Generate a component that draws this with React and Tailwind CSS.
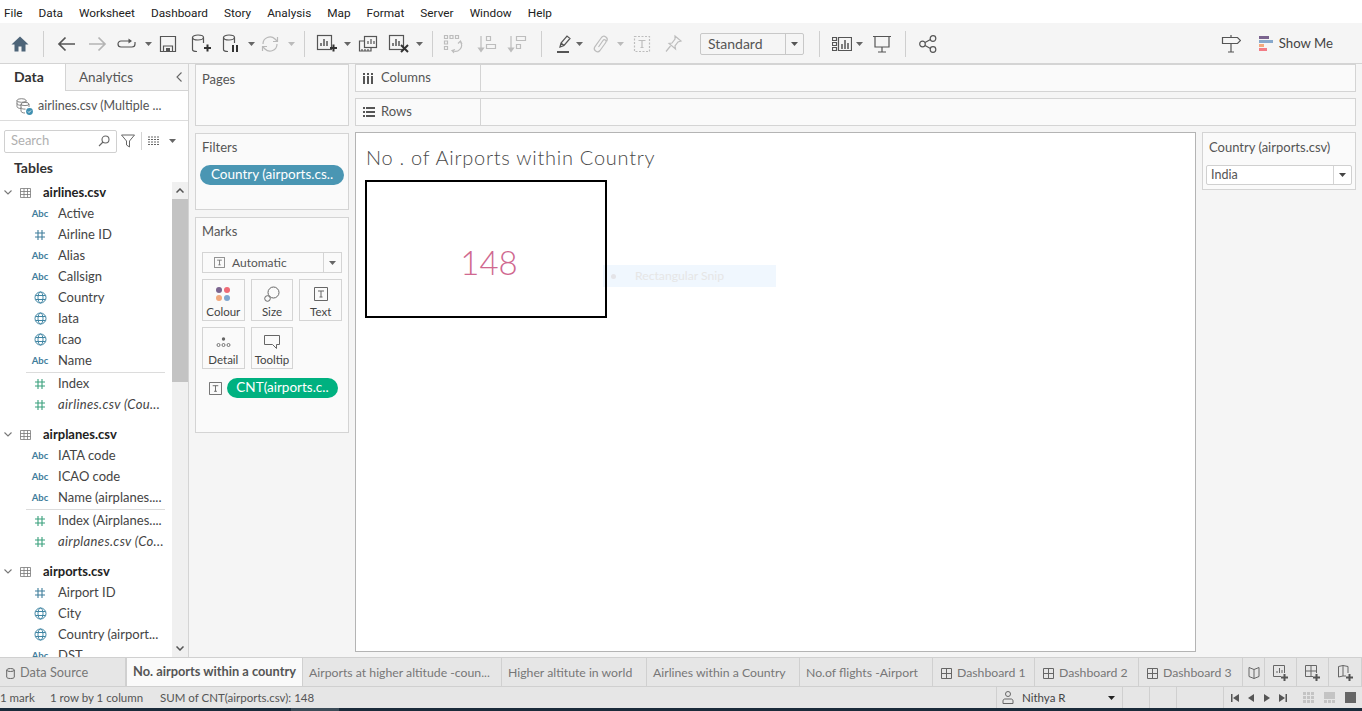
import React from "react";

const Icon = ({ w = 20, h = 20, className = "", children }) => (
  <svg
    viewBox={`0 0 ${w} ${h}`}
    width={w}
    height={h}
    fill="none"
    stroke="currentColor"
    strokeWidth="1.2"
    className={`flex-none ${className}`}
  >
    {children}
  </svg>
);

const Caret = ({ className = "" }) => (
  <svg viewBox="0 0 7 4" width="7" height="4" className={`flex-none ${className}`}>
    <path d="M0 0h7L3.5 4z" fill="currentColor" />
  </svg>
);

const Sep = ({ className = "" }) => <div className={`h-[26px] w-px flex-none bg-[#cfcfcf] ${className}`} />;

const Plus = () => <path d="M14 15h7M17.5 11.5v7" stroke="#333" strokeWidth="2" />;

function BarsBox({ children }) {
  return (
    <>
      <rect x="1.5" y="2.5" width="14" height="14" />
      <path d="M5 13v-3M8 13V6M11 13V8" strokeWidth="1.5" />
      {children}
    </>
  );
}

function Toolbar() {
  return (
    <div className="flex h-[41px] flex-none items-center border-b border-[#d4d4d4] bg-[#f5f5f5] pl-[10px] pt-[2px] text-[#555]">
      <Icon className="text-[#4d6478]">
        <path d="M10 2.5 1.5 10.5H4.5V17.5H8.5V12.5H11.5V17.5H15.5V10.5H18.5z" fill="currentColor" stroke="none" />
      </Icon>
      <Sep className="ml-[13px]" />
      <Icon className="ml-[12px]">
        <path d="M19 10H3M9.5 3.5 3 10l6.5 6.5" strokeWidth="1.7" />
      </Icon>
      <Icon className="ml-[12px] text-[#b4b4b4]">
        <path d="M1 10h16M10.500 3.500 17 10l-6.500 6.500" strokeWidth="1.7" />
      </Icon>
      <Icon className="ml-[9px]">
        <path d="M13 7H4a3 3 0 0 0 0 6h11a3 3 0 0 0 3-3V8" />
        <path d="M11.500 4.500 15 7l-3.500 2.500z" fill="currentColor" stroke="none" />
      </Icon>
      <Caret className="ml-[8px] text-[#666]" />
      <Icon className="ml-[7px]" w={18} h={18}>
        <path d="M1.500 1.500h15v15h-15zM4.500 16.500V11h9v5.500" />
        <path d="M7 13h4v3H7z" fill="currentColor" stroke="none" />
      </Icon>
      <Icon className="ml-[13px]" w={22} h={22}>
        <ellipse cx="8" cy="4.500" rx="5.500" ry="2.500" />
        <path d="M2.500 4.500v12c0 1 1.500 2 4.500 2M13.500 4.500V10" />
        <Plus />
      </Icon>
      <Icon className="ml-[9px]" w={22} h={22}>
        <ellipse cx="8" cy="4.500" rx="5.500" ry="2.500" />
        <path d="M2.500 4.500v12c0 1 1.500 2 4.500 2M13.500 4.500V10" />
        <path d="M12 12v7M16 12v7" stroke="#333" strokeWidth="2" />
      </Icon>
      <Caret className="ml-[5px] text-[#666]" />
      <Icon className="ml-[5px] text-[#b9b9b9]">
        <path d="M3 10a7 7 0 0 1 12-5l2 2M17 10a7 7 0 0 1-12 5l-2-2" />
        <path d="M17.500 3v4.500H13M2.500 17v-4.500H7" />
      </Icon>
      <Caret className="ml-[8px] text-[#bbb]" />
      <Sep className="ml-[9px]" />
      <Icon className="ml-[11px]" w={22} h={22}>
        <BarsBox />
        <Plus />
      </Icon>
      <Caret className="ml-[6px] text-[#666]" />
      <Icon className="ml-[7px]" w={20} h={18}>
        <rect x="6.500" y="1.500" width="12" height="11" />
        <path d="M10 9V6M13 9V4M16 9V6" />
        <path d="M6 6H1.500v10H13v-3" />
        <path d="M4 16v-2M7 16v-2M10 16v-2" />
      </Icon>
      <Icon className="ml-[10px]" w={22} h={22}>
        <BarsBox />
        <path d="m13 12 7 7M20 12l-7 7" stroke="#333" strokeWidth="2" />
      </Icon>
      <Caret className="ml-[6px] text-[#666]" />
      <Sep className="ml-[9px]" />
      <Icon className="ml-[10px] text-[#bdbdbd]" w={20} h={20}>
        <path d="M1.500 1.500h3v3h-3zM7 1.500h3v3H7zM12.500 1.500h3v3h-3zM1.500 7h3v3h-3zM1.500 12.500h3v3h-3z" />
        <path d="M17.500 8a6 6 0 0 1-8 8.500M15 9.500 17.500 7l1.500 3M11 19l-2-2.500 3-1" />
      </Icon>
      <Icon className="ml-[14px] text-[#bdbdbd]">
        <path d="M4 2v15M1.500 14 4 17.500 6.500 14z" fill="currentColor" />
        <path d="M9.500 2.500h4v4h-4zM9.500 10.500h9v4h-9z" />
      </Icon>
      <Icon className="ml-[10px] text-[#bdbdbd]">
        <path d="M4 2v15M1.500 14 4 17.500 6.500 14z" fill="currentColor" />
        <path d="M9.500 2.500h9v4h-9zM9.500 10.500h4v4h-4z" />
      </Icon>
      <Sep className="ml-[14px]" />
      <Icon className="ml-[11px]">
        <path d="m7 13 1-4 6-7 3 2.500-6 7zM8 9l3 2.500" />
        <path d="M4 18h12" strokeWidth="2" />
      </Icon>
      <Caret className="ml-[3px] text-[#666]" />
      <Icon className="ml-[8px] text-[#bdbdbd]">
        <path d="M7.500 13 12 6.500a1.700 1.700 0 0 1 2.800 2L9 16.500a3.200 3.200 0 0 1-5.200-3.700L10.500 3.500a3.200 3.200 0 0 1 5.200 3.700" />
      </Icon>
      <Caret className="ml-[6px] text-[#bbb]" />
      <Icon className="ml-[9px] text-[#bdbdbd]" w={18} h={18}>
        <path d="M1.500 1.500h15v15h-15z" strokeDasharray="2 1.500" />
        <path d="M5.500 5.500h7M9 5.500v7M7.500 12.500h3" />
      </Icon>
      <Icon className="ml-[12px] text-[#bdbdbd]">
        <path d="m12 2 6 5-3 1-3 4 .5 3L6 9.500l3-.5 3-4zM7.500 12 3 17.500" />
      </Icon>
      <div className="ml-[17px] flex h-[22px] w-[104px] flex-none items-center rounded-[2px] border border-[#c8c8c8] bg-[#f5f5f5] text-[14px] text-[#555]">
        <span className="flex-1 pl-[7px] leading-none">Standard</span>
        <div className="flex h-full w-[18px] items-center justify-center border-l border-[#c8c8c8]">
          <Caret className="text-[#555]" />
        </div>
      </div>
      <Sep className="ml-[15px]" />
      <Icon className="ml-[12px]" w={20} h={18}>
        <path d="M.500 2.500h4v3h-4zM.500 7.500h4v3h-4zM.500 12.500h4v3h-4zM6.500 2.500h13v13h-13z" />
        <path d="M10 14V9M13 14V5M16 14V8" strokeWidth="1.500" />
      </Icon>
      <Caret className="ml-[4px] text-[#666]" />
      <Icon className="ml-[10px]" w={18} h={18}>
        <path d="M0 1.500h18M2 1.500V12h14V1.500M9 12v5M5 17h8" />
      </Icon>
      <Sep className="ml-[14px]" />
      <Icon className="ml-[13px]" w={18} h={18}>
        <circle cx="3.500" cy="9" r="2.800" />
        <circle cx="14" cy="3.500" r="2.800" />
        <circle cx="14" cy="14.500" r="2.800" />
        <path d="m6 7.500 5.500-3M6 10.500l5.500 3" />
      </Icon>
      <div className="flex-1" />
      <Icon className="mr-[18px]">
        <path d="M1.500 3.500h15l3 3-3 3h-15zM10 1v2.500M10 9.500V18M7 18h6" />
      </Icon>
      <div className="mr-[29px] flex items-center">
        <div className="mr-[6px] flex w-[14px] flex-col gap-px">
          <div className="h-[3px] w-[10px] bg-[#7b648f]" />
          <div className="h-[3px] w-[14px] bg-[#86a8cc]" />
          <div className="h-[3px] w-[5px] bg-[#f2a97e]" />
          <div className="h-[3px] w-[8px] bg-[#f27c86]" />
        </div>
        <span className="text-[13.2px] text-[#444]">Show Me</span>
      </div>
    </div>
  );
}

const Hash = ({ color }) => (
  <svg viewBox="0 0 12 12" width="12" height="12" fill="none" stroke={color} strokeWidth="1.100" className="flex-none">
    <path d="M4 1v10M8 1v10M1 4h10M1 8h10" />
  </svg>
);

const Globe = () => (
  <svg viewBox="0 0 13 13" width="13" height="13" fill="none" stroke="#3f85a3" strokeWidth="1" className="flex-none">
    <circle cx="6.500" cy="6.500" r="5.500" />
    <ellipse cx="6.500" cy="6.500" rx="2.500" ry="5.500" />
    <path d="M1.500 4.500h10M1.500 8.500h10" />
  </svg>
);

function Field({ type, name, italic }) {
  return (
    <div className="flex h-[21px] flex-none items-center">
      <div className="ml-[30px] mr-[8px] flex w-[20px] flex-none justify-center">
        {type === "abc" && <span className="text-[9.5px] font-bold leading-none text-[#3f7d9b]">Abc</span>}
        {type === "num" && <Hash color="#3f7d9b" />}
        {type === "measure" && <Hash color="#39a07c" />}
        {type === "geo" && <Globe />}
      </div>
      <span className={`whitespace-nowrap text-[13px] text-[#444] ${italic ? "italic tracking-[0.35px]" : ""}`}>{name}</span>
    </div>
  );
}

function TableHead({ name, className = "" }) {
  return (
    <div className={`flex h-[21px] flex-none items-center ${className}`}>
      <svg viewBox="0 0 8 5" width="8" height="5" fill="none" stroke="#777" strokeWidth="1.100" className="ml-[4px]">
        <path d="m.5.5 3.500 3.500L7.500.5" />
      </svg>
      <svg viewBox="0 0 11 10" width="11" height="10" fill="none" stroke="#777" strokeWidth="0.800" className="ml-[8px]">
        <path d="M.5.5h10v9H.5zM.5 3.500h10M.5 6.500h10M4 .5v9M7.500.5v9" />
      </svg>
      <span className="ml-[12px] text-[13px] font-bold text-[#222]">{name}</span>
    </div>
  );
}

const Divider = () => <div className="mt-px ml-[26px] h-px w-[139px] flex-none bg-[#dcdcdc]" />;

function DataPane() {
  return (
    <div className="flex w-[189px] flex-none flex-col border-r border-[#d4d4d4] bg-white">
      <div className="flex h-[27px] flex-none">
        <div className="flex w-[66px] items-center border-r border-[#d4d4d4] pb-[2px] pl-[14px] text-[14px] font-bold text-[#333]">
          Data
        </div>
        <div className="flex flex-1 items-center justify-between border-b border-[#d4d4d4] bg-[#f5f5f5] pl-[13px] pr-[6px] text-[13.5px] text-[#555]">
          Analytics
          <svg viewBox="0 0 6 10" width="6" height="10" fill="none" stroke="#666" strokeWidth="1.100">
            <path d="M5.500.5 1 5l4.500 4.500" />
          </svg>
        </div>
      </div>
      <div className="flex h-[30px] flex-none items-center border-b border-[#dcdcdc] pl-[16px] pt-[1px]">
        <svg viewBox="0 0 17 17" width="17" height="17" fill="none" stroke="#777" strokeWidth="0.900">
          <ellipse cx="5.500" cy="2.500" rx="4.500" ry="1.800" />
          <path d="M1 2.500v6c0 1 1.500 2 4 2M10 2.500v2M1 5.500c0 1 2 2 4.500 1.800" />
          <ellipse cx="9" cy="6" rx="4" ry="1.600" />
          <path d="M5 6v7c0 1 1.500 2 4 2M13 6v3M5 9.500c0 1 2 1.800 4.500 1.600" />
          <circle cx="13.500" cy="13.500" r="3.400" fill="#3f8fb0" stroke="none" />
          <path d="m12 13.500 1 1 2-2" stroke="#fff" />
        </svg>
        <span className="ml-[5px] whitespace-nowrap text-[12.5px] text-[#555]">airlines.csv (Multiple ...</span>
      </div>
      <div className="flex h-[31px] flex-none items-center pl-[4px] pt-[9px]">
        <div className="flex h-[23px] w-[113px] items-center justify-between rounded-[2px] border border-[#d0d0d0] pl-[6px] pr-[6px] text-[13px] text-[#b0b0b0]">
          Search
          <svg viewBox="0 0 12 12" width="12" height="12" fill="none" stroke="#666" strokeWidth="1.100">
            <circle cx="7.500" cy="4.500" r="3.500" />
            <path d="M5 7 1 11" />
          </svg>
        </div>
        <svg viewBox="0 0 14 14" width="14" height="14" fill="none" stroke="#666" strokeWidth="1" className="ml-[4px]">
          <path d="M.5 1h13L8.500 7v6l-3-2V7z" />
        </svg>
        <div className="ml-[6px] h-[18px] w-px bg-[#d4d4d4]" />
        <svg viewBox="0 0 12 10" width="12" height="10" fill="none" stroke="#666" strokeWidth="1" className="ml-[6px]">
          <path d="M0 1h12M0 3.500h12M0 6h12M0 8.500h12" strokeDasharray="2 1" />
        </svg>
        <Caret className="ml-[9px] text-[#666]" />
      </div>
      <div className="flex h-[30px] flex-none items-center pl-[14px] text-[14px] font-bold text-[#333]">Tables</div>
      <div className="flex min-h-0 flex-1">
        <div className="flex min-w-0 flex-1 flex-col overflow-hidden">
          <TableHead name="airlines.csv" />
          <Field type="abc" name="Active" />
          <Field type="num" name="Airline ID" />
          <Field type="abc" name="Alias" />
          <Field type="abc" name="Callsign" />
          <Field type="geo" name="Country" />
          <Field type="geo" name="Iata" />
          <Field type="geo" name="Icao" />
          <Field type="abc" name="Name" />
          <Divider />
          <Field type="measure" name="Index" />
          <Field type="measure" name="airlines.csv (Cou..." italic />
          <TableHead name="airplanes.csv" className="mt-[9px]" />
          <Field type="abc" name="IATA code" />
          <Field type="abc" name="ICAO code" />
          <Field type="abc" name="Name (airplanes...." />
          <Divider />
          <Field type="measure" name="Index (Airplanes...." />
          <Field type="measure" name="airplanes.csv (Co..." italic />
          <TableHead name="airports.csv" className="mt-[9px]" />
          <Field type="num" name="Airport ID" />
          <Field type="geo" name="City" />
          <Field type="geo" name="Country (airport..." />
          <Field type="abc" name="DST" />
        </div>
        <div className="flex w-[16px] flex-none flex-col bg-[#f0f0f0]">
          <div className="flex h-[17px] flex-none items-center justify-center">
            <svg viewBox="0 0 8 5" width="8" height="5" fill="none" stroke="#555" strokeWidth="1.500">
              <path d="m.5 4.500 3.500-3.500 3.500 3.500" />
            </svg>
          </div>
          <div className="h-[183px] flex-none bg-[#c3c3c3]" />
          <div className="flex-1" />
          <div className="flex h-[17px] flex-none items-center justify-center">
            <svg viewBox="0 0 8 5" width="8" height="5" fill="none" stroke="#555" strokeWidth="1.500">
              <path d="m.5.5 3.500 3.500L7.500.5" />
            </svg>
          </div>
        </div>
      </div>
    </div>
  );
}

const Card = ({ title, className = "", titleClass = "pt-[4px]", children }) => (
  <div className={`flex-none border border-[#d4d4d4] bg-[#fafafa] ${className}`}>
    <div className={`pl-[6px] text-[13px] leading-[18px] text-[#555] ${titleClass}`}>{title}</div>
    {children}
  </div>
);

function MarkBtn({ label, children }) {
  return (
    <div className="flex h-[42px] flex-col items-center justify-between border border-[#d4d4d4] pb-[1px] pt-[5px] text-[11.5px] leading-[15px] text-[#444]">
      <div className="flex h-[18px] items-center justify-center">{children}</div>
      {label}
    </div>
  );
}

const TBox = ({ size = 14 }) => (
  <svg viewBox="0 0 14 14" width={size} height={size} fill="none" stroke="#666" strokeWidth="1" className="flex-none">
    <path d="M.5.5h13v13H.5zM4 4h6M7 4v6M5.500 10h3" />
  </svg>
);

function Pill({ color, width, children }) {
  return (
    <div
      className={`flex h-[20px] items-center justify-center rounded-full text-[13.5px] leading-none text-white ${color} ${width}`}
    >
      {children}
    </div>
  );
}

function CardsColumn() {
  return (
    <div className="flex w-[166px] flex-none flex-col gap-[7px] bg-[#f5f5f5] pl-[6px]">
      <Card title="Pages" className="h-[62px] w-[154px]" titleClass="pt-[5px]" />
      <Card title="Filters" className="h-[77px] w-[154px]">
        <div className="pl-[4px] pt-[9px]">
          <Pill color="bg-[#4a96b3]" width="w-[144px]">Country (airports.cs..</Pill>
        </div>
      </Card>
      <Card title="Marks" className="h-[216px] w-[154px]">
        <div className="px-[6px] pt-[12px]">
          <div className="flex h-[21px] items-center border border-[#d4d4d4] text-[12px] text-[#555]">
            <div className="ml-[11px] mr-[7px]">
              <TBox size={11} />
            </div>
            <span className="flex-1">Automatic</span>
            <div className="flex h-full w-[18px] items-center justify-center border-l border-[#d4d4d4]">
              <Caret className="text-[#666]" />
            </div>
          </div>
          <div className="mt-[6px] grid grid-cols-3 gap-x-[6px] gap-y-[6px]">
            <MarkBtn label="Colour">
              <div className="grid grid-cols-2 gap-[2px]">
                <div className="h-[6px] w-[6px] rounded-full bg-[#7b648f]" />
                <div className="h-[6px] w-[6px] rounded-full bg-[#ef6a76]" />
                <div className="h-[6px] w-[6px] rounded-full bg-[#f2a97e]" />
                <div className="h-[6px] w-[6px] rounded-full bg-[#7fa6d0]" />
              </div>
            </MarkBtn>
            <MarkBtn label="Size">
              <svg viewBox="0 0 16 16" width="16" height="16" fill="none" stroke="#666" strokeWidth="1">
                <circle cx="9.500" cy="6.500" r="5.500" />
                <circle cx="3.500" cy="12.500" r="2.800" fill="#fafafa" />
              </svg>
            </MarkBtn>
            <MarkBtn label="Text">
              <TBox />
            </MarkBtn>
            <MarkBtn label="Detail">
              <svg viewBox="0 0 15 12" width="15" height="12" fill="none" stroke="#666" strokeWidth="0.900">
                <circle cx="7.500" cy="3" r="1.700" fill="#666" stroke="none" />
                <circle cx="2.500" cy="9" r="1.500" />
                <circle cx="7.500" cy="9" r="1.500" />
                <circle cx="12.500" cy="9" r="1.500" />
              </svg>
            </MarkBtn>
            <MarkBtn label="Tooltip">
              <svg viewBox="0 0 16 15" width="16" height="15" fill="none" stroke="#666" strokeWidth="1">
                <path d="M.5.5h15v9h-3v4l-4-4H.5z" />
              </svg>
            </MarkBtn>
          </div>
          <div className="mt-[9px] flex items-center pl-[7px]">
            <TBox size={13} />
            <div className="ml-[5px]">
              <Pill color="bg-[#00b180]" width="w-[111px]">CNT(airports.c..</Pill>
            </div>
          </div>
        </div>
      </Card>
    </div>
  );
}

function Shelf({ label, icon }) {
  return (
    <div className="flex h-[28px] flex-none border border-[#d4d4d4] bg-[#fafafa]">
      <div className="flex w-[125px] flex-none items-center border-r border-[#d4d4d4] pl-[7px] text-[13px] text-[#555]">
        {icon}
        <span className="ml-[6px]">{label}</span>
      </div>
    </div>
  );
}

function Workspace() {
  return (
    <div className="flex min-w-0 flex-1 flex-col gap-[6px] bg-[#f5f5f5] pr-[6px]">
      <Shelf
        label="Columns"
        icon={
          <svg viewBox="0 0 11 11" width="11" height="11" fill="#555" className="mr-[1px] flex-none">
            <path d="M0 0h2v2H0zM4 0h2v2H4zM8 0h2v2H8zM0 3h2v8H0zM4 3h2v8H4zM8 3h2v8H8z" />
          </svg>
        }
      />
      <Shelf
        label="Rows"
        icon={
          <svg viewBox="0 0 12 10" width="12" height="10" fill="#555" className="flex-none">
            <path d="M0 0h2v2H0zM0 4h2v2H0zM0 8h2v2H0zM3 0h9v2H3zM3 4h9v2H3zM3 8h9v2H3z" />
          </svg>
        }
      />
      <div className="flex min-h-0 flex-1 gap-[6px] pb-[5px]">
        <div className="relative min-w-0 flex-1 border border-[#b4b4b4] bg-white pl-[9px] pt-[10px]">
          <div className="ml-[1px] text-[20px] font-light leading-[28px] tracking-[0.73px] text-[#4a4a4a]">
            No . of Airports within Country
          </div>
          <div className="relative z-10 mt-[9px] flex h-[138px] w-[242px] items-center justify-center border-2 border-black pl-[6px] pt-[28px] text-[33px] font-light text-[#d0688f]">
            148
          </div>
          <div className="absolute left-[247px] top-[132px] flex h-[22px] w-[173px] items-center bg-[#f0f7fe] text-[12.2px] text-[#e6e6e6]">
            <div className="ml-[8px] mr-[19px] h-[5px] w-[5px] rounded-full bg-[#e4e4e8]" />
            Rectangular Snip
          </div>
        </div>
        <div className="h-[58px] w-[154px] flex-none border border-[#d4d4d4] bg-[#fafafa]">
          <div className="pl-[6px] pt-[5px] text-[13px] leading-[18px] text-[#555]">Country (airports.csv)</div>
          <div className="ml-[3px] mt-[9px] flex h-[20px] w-[146px] items-center rounded-[2px] border border-[#d0d0d0] bg-white text-[12.5px] text-[#555]">
            <span className="flex-1 pl-[4px]">India</span>
            <div className="flex h-full w-[18px] items-center justify-center border-l border-[#d4d4d4]">
              <Caret className="text-[#444]" />
            </div>
          </div>
        </div>
      </div>
    </div>
  );
}

const DashIcon = () => (
  <svg viewBox="0 0 11 11" width="11" height="11" fill="none" stroke="#666" strokeWidth="1" className="ml-[2px] mr-[5px] flex-none">
    <path d="M.5.5h10v10H.5zM.5 5.500h10M5.500.5v10" />
  </svg>
);

function Tab({ width, active, children }) {
  return (
    <div
      className={`flex h-full flex-none items-center whitespace-nowrap border-r border-[#d0d0d0] ${width} ${
        active
          ? "justify-center bg-[#fafafa] text-[12.8px] font-bold text-[#555]"
          : "bg-[#e6e6e6] pl-[6px] pt-[2px] text-[12.25px] text-[#777]"
      }`}
    >
      {children}
    </div>
  );
}

function TabStrip() {
  return (
    <div className="flex h-[30px] flex-none border-y border-[#d0d0d0] bg-[#e6e6e6]">
      <div className="flex h-full w-[127px] flex-none items-center border-r-2 border-[#d0d0d0] pl-[6px] pt-[2px] text-[12.75px] text-[#777]">
        <svg viewBox="0 0 9 11" width="9" height="11" fill="none" stroke="#666" strokeWidth="1" className="mr-[5px]">
          <ellipse cx="4.500" cy="2" rx="3.800" ry="1.500" />
          <path d="M.7 2v7c0 1 1.500 1.500 3.800 1.500S8.300 10 8.300 9V2" />
        </svg>
        Data Source
      </div>
      <Tab width="w-[176px]" active>No. airports within a country</Tab>
      <Tab width="w-[199px]">Airports at higher altitude -coun...</Tab>
      <Tab width="w-[145px]">Higher altitute in world</Tab>
      <Tab width="w-[153px]">Airlines within a Country</Tab>
      <Tab width="w-[133px]">No.of flights -Airport</Tab>
      <Tab width="w-[102px]"><DashIcon />Dashboard 1</Tab>
      <Tab width="w-[104px]"><DashIcon />Dashboard 2</Tab>
      <Tab width="w-[104px]"><DashIcon />Dashboard 3</Tab>
      <Tab width="w-[22px]">
        <svg viewBox="0 0 12 12" width="12" height="12" fill="none" stroke="#666" strokeWidth="1" className="-ml-[1px]">
          <path d="M6 2.500 1 .5v9l5 2 5-2v-9zM6 2.500v9" />
        </svg>
      </Tab>
      <Tab width="w-[32px]">
        <svg viewBox="0 0 16 16" width="16" height="16" fill="none" stroke="#666" strokeWidth="1" className="ml-[2px]">
          <path d="M8 11.500H.5V.5h11V8M4 8V6M6.500 8V3M9 8V5" />
          <path d="M8 12.500h7M11.500 9v7" stroke="#555" strokeWidth="2" />
        </svg>
      </Tab>
      <Tab width="w-[32px]">
        <svg viewBox="0 0 16 16" width="16" height="16" fill="none" stroke="#666" strokeWidth="1" className="ml-[2px]">
          <path d="M8 11.500H.5V.5h11V8M.5 6h11M6 .5v11" />
          <path d="M8 12.500h7M11.500 9v7" stroke="#555" strokeWidth="2" />
        </svg>
      </Tab>
      <Tab width="w-[33px]">
        <svg viewBox="0 0 16 16" width="16" height="16" fill="none" stroke="#666" strokeWidth="1" className="ml-[3px]">
          <path d="M8 11H5L.5 12V1.500L5 .5l5 1V8M5 .5V11" />
          <path d="M8 12.500h7M11.500 9v7" stroke="#555" strokeWidth="2" />
        </svg>
      </Tab>
    </div>
  );
}

const NavArrow = ({ d }) => (
  <svg viewBox="0 0 8 8" width="8" height="8" fill="#555" className="flex-none">
    <path d={d} />
  </svg>
);

function StatusBar() {
  return (
    <div className="flex h-[21px] flex-none items-center bg-[#e6e6e6] text-[11.5px] text-[#555]">
      <span className="w-[50px] flex-none">1 mark</span>
      <span className="w-[110px] flex-none">1 row by 1 column</span>
      <span>SUM of CNT(airports.csv): 148</span>
      <div className="flex-1" />
      <div className="flex h-full w-[126px] flex-none items-center border-l border-[#d0d0d0] pl-[5px] text-[#444]">
        <svg viewBox="0 0 12 13" width="12" height="13" fill="none" stroke="#666" strokeWidth="1">
          <circle cx="6" cy="3" r="2.500" />
          <path d="M1 12.500V10c0-1.500 1-2 2-2h6c1 0 2 .5 2 2v2.500z" />
        </svg>
        <span className="ml-[8px] flex-1">Nithya R</span>
        <Caret className="mr-[7px] text-[#222]" />
      </div>
      <div className="h-full w-[27px] flex-none border-l border-[#d0d0d0]" />
      <div className="h-full w-[27px] flex-none border-l border-[#d0d0d0]" />
      <div className="h-full w-[47px] flex-none border-l border-[#d0d0d0]" />
      <div className="flex h-full w-[72px] flex-none items-center gap-[8px] border-l border-[#d0d0d0] pl-[7px]">
        <NavArrow d="M0 0h1.500v8H0zM8 0v8L2 4z" />
        <NavArrow d="M7 0v8L1 4z" />
        <NavArrow d="M1 0v8l6-4z" />
        <NavArrow d="M0 0v8l6-4zM6.500 0H8v8H6.500z" />
      </div>
      <div className="flex h-full w-[67px] flex-none items-center gap-[10px] pl-[8px]">
        <svg viewBox="0 0 11 11" width="11" height="11" fill="#c4c4c4" className="flex-none">
          <path d="M0 0h3v3H0zM4 0h3v3H4zM8 0h3v3H8zM0 4h3v3H0zM4 4h3v3H4zM8 4h3v3H8zM0 8h3v3H0zM4 8h3v3H4zM8 8h3v3H8z" />
        </svg>
        <svg viewBox="0 0 11 11" width="11" height="11" fill="#c4c4c4" className="flex-none">
          <path d="M0 0h11v7H0zM0 8h3v3H0zM4 8h3v3H4zM8 8h3v3H8z" />
        </svg>
        <div className="h-[11px] w-[11px] flex-none bg-[#666]" />
      </div>
    </div>
  );
}

export default function App() {
  return (
    <div className="flex h-[711px] w-[1362px] flex-col overflow-hidden bg-[#f5f5f5] font-['Lato',sans-serif]">
      <div className="flex h-[23px] flex-none items-center gap-[16px] bg-white pl-[4px] pt-[5px] font-['Roboto',sans-serif] text-[11.8px] text-[#222]">
        {["File", "Data", "Worksheet", "Dashboard", "Story", "Analysis", "Map", "Format", "Server", "Window", "Help"].map((m) => (
          <span key={m}>{m}</span>
        ))}
      </div>
      <Toolbar />
      <div className="flex min-h-0 flex-1">
        <DataPane />
        <CardsColumn />
        <Workspace />
      </div>
      <TabStrip />
      <StatusBar />
      <div className="flex h-[3px] flex-none bg-[#1a2b3a]">
        <div className="ml-[291px] w-[48px] bg-[#3c4c58]" />
      </div>
    </div>
  );
}
